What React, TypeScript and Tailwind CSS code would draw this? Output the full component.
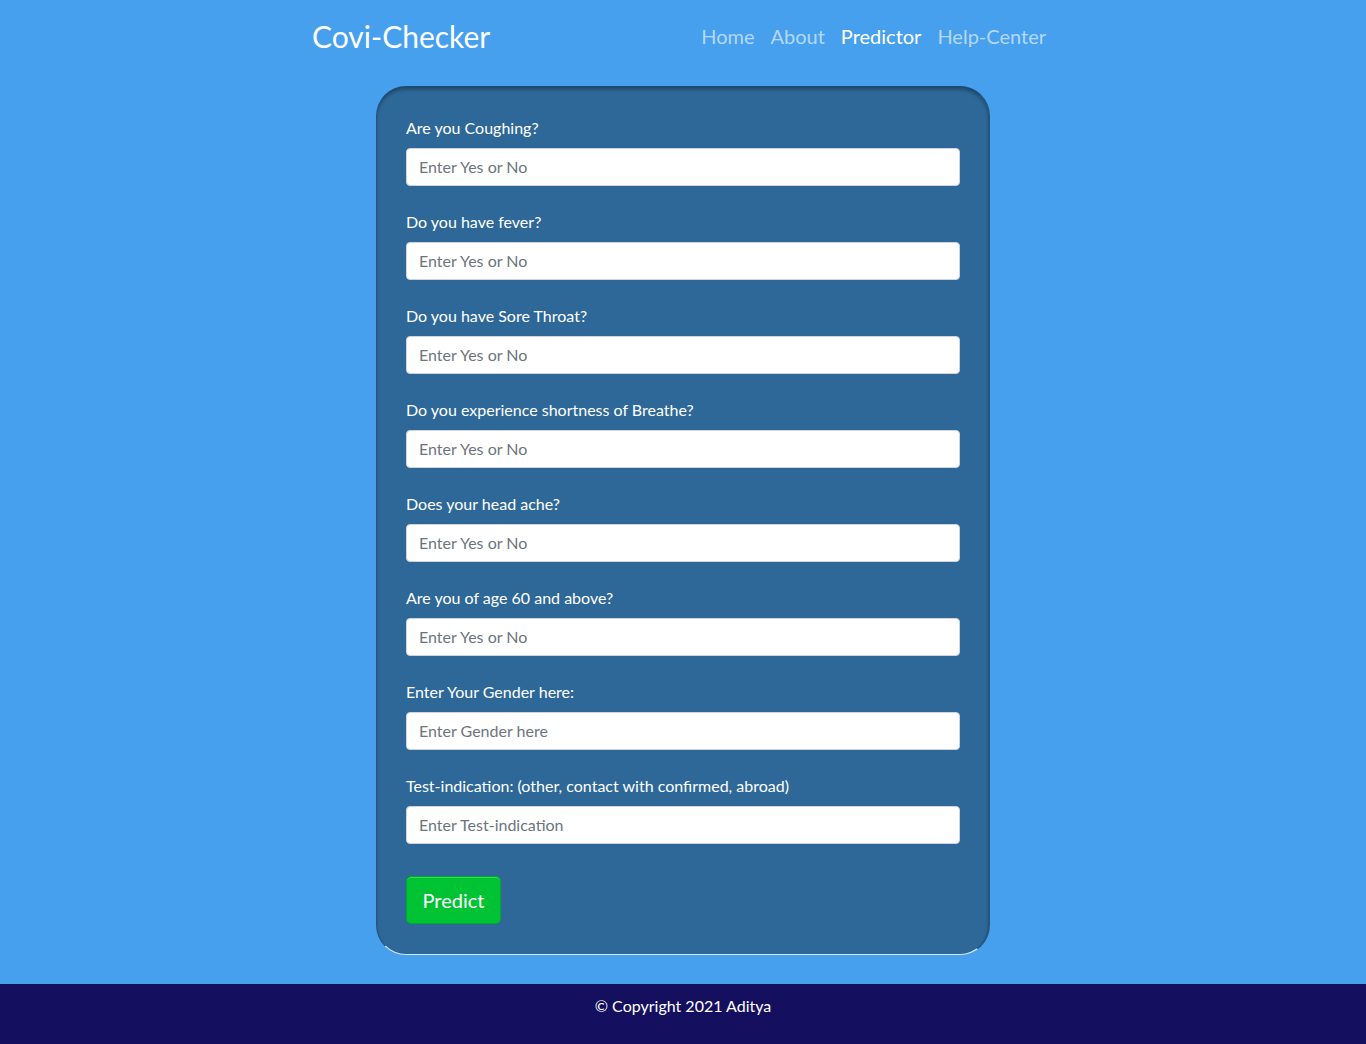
import React from "react";

const questions = [
  { label: "Are you Coughing?", placeholder: "Enter Yes or No" },
  { label: "Do you have fever?", placeholder: "Enter Yes or No" },
  { label: "Do you have Sore Throat?", placeholder: "Enter Yes or No" },
  { label: "Do you experience shortness of Breathe?", placeholder: "Enter Yes or No" },
  { label: "Does your head ache?", placeholder: "Enter Yes or No" },
  { label: "Are you of age 60 and above?", placeholder: "Enter Yes or No" },
  { label: "Enter Your Gender here:", placeholder: "Enter Gender here" },
  {
    label: "Test-indication: (other, contact with confirmed, abroad)",
    placeholder: "Enter Test-indication",
  },
];

export default function App() {
  return (
    <div className="min-h-[1044px] bg-[#46a0ee] flex flex-col font-['Lato','Open_Sans',sans-serif]">
      <header className="ml-[312px] w-[734px] h-[86px] flex items-start justify-between pt-[14px]">
        <a className="text-[30px] leading-[44px] text-white">Covi-Checker</a>
        <nav className="flex gap-[16px] text-[20px] leading-[44px]">
          <a className="text-white/60">Home</a>
          <a className="text-white/60">About</a>
          <a className="text-white">Predictor</a>
          <a className="text-white/60">Help-Center</a>
        </nav>
      </header>

      <main className="flex justify-center">
        <form className="w-[614px] bg-[#2e6898] rounded-[30px] border-t-2 border-l border-r-2 border-b border-t-[#1e4a70] border-l-[#24557e] border-r-[#24557e] border-b-[#d6e6f4] shadow-[inset_0_2px_3px_rgba(0,0,0,0.25)] pl-[29px] pr-[28px] pt-[30px] pb-[30px]">
          {questions.map((q) => (
            <div key={q.label} className="mb-[26px]">
              <label className="block text-white text-[16px] leading-[20px] mb-[10px]">
                {q.label}
              </label>
              <input
                type="text"
                placeholder={q.placeholder}
                className="w-full h-[38px] px-[12px] pb-[1px] rounded-[4px] bg-white border border-[#ced4da] text-[16px] text-[#495057] placeholder:text-[#6c757d] outline-none"
              />
            </div>
          ))}
          <button
            type="button"
            className="mt-[6px] w-[95px] h-[48px] rounded-[5px] bg-[#00c333] border border-[#00a82b] shadow-[inset_0_1px_0_rgba(255,255,255,0.25)] text-white text-[20px]"
          >
            Predict
          </button>
        </form>
      </main>

      <footer className="mt-auto h-[60px] bg-[#140f5f] flex justify-center pt-[12px]">
        <span className="text-white text-[16px] leading-[20px]">© Copyright 2021 Aditya</span>
      </footer>
    </div>
  );
}
